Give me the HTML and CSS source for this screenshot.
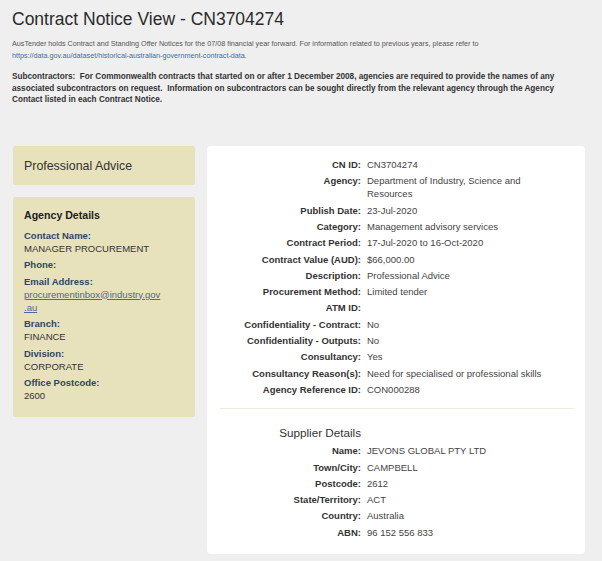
FILE: index.html
```html
<!DOCTYPE html>
<html>
<head>
<meta charset="utf-8">
<link rel="stylesheet" href="styles.css">
</head>
<body>
<div class="page">
  <h1 class="title">Contract Notice View - CN3704274</h1>
  <p class="intro">AusTender holds Contract and Standing Offer Notices for the 07/08 financial year forward. For information related to previous years, please refer to <a class="link" href="#">https://data.gov.au/dataset/historical-australian-government-contract-data</a>.</p>
  <p class="subs">Subcontractors:&nbsp; For Commonwealth contracts that started on or after 1 December 2008, agencies are required to provide the names of any associated subcontractors on request.&nbsp; Information on subcontractors can be sought directly from the relevant agency through the Agency Contact listed in each Contract Notice.</p>

  <div class="main">
    <div class="side">
      <div class="box box-cat">Professional Advice</div>
      <div class="box box-agency">
        <div class="agency-title">Agency Details</div>
        <dl class="agency-list">
          <dt>Contact Name:</dt><dd>MANAGER PROCUREMENT</dd>
          <dt>Phone:</dt><dd></dd>
          <dt>Email Address:</dt><dd><a class="mail" href="#">procurementinbox@industry.gov<br>.au</a></dd>
          <dt>Branch:</dt><dd>FINANCE</dd>
          <dt>Division:</dt><dd>CORPORATE</dd>
          <dt>Office Postcode:</dt><dd>2600</dd>
        </dl>
      </div>
    </div>

    <div class="panel">
      <div class="rows">
        <div class="row"><span class="lbl">CN ID:</span><span class="val">CN3704274</span></div>
        <div class="row"><span class="lbl">Agency:</span><span class="val">Department of Industry, Science and Resources</span></div>
        <div class="row"><span class="lbl">Publish Date:</span><span class="val">23-Jul-2020</span></div>
        <div class="row"><span class="lbl">Category:</span><span class="val">Management advisory services</span></div>
        <div class="row"><span class="lbl">Contract Period:</span><span class="val">17-Jul-2020 to 16-Oct-2020</span></div>
        <div class="row"><span class="lbl">Contract Value (AUD):</span><span class="val">$66,000.00</span></div>
        <div class="row"><span class="lbl">Description:</span><span class="val">Professional Advice</span></div>
        <div class="row"><span class="lbl">Procurement Method:</span><span class="val">Limited tender</span></div>
        <div class="row"><span class="lbl">ATM ID:</span><span class="val"></span></div>
        <div class="row"><span class="lbl">Confidentiality - Contract:</span><span class="val">No</span></div>
        <div class="row"><span class="lbl">Confidentiality - Outputs:</span><span class="val">No</span></div>
        <div class="row"><span class="lbl">Consultancy:</span><span class="val">Yes</span></div>
        <div class="row"><span class="lbl">Consultancy Reason(s):</span><span class="val">Need for specialised or professional skills</span></div>
        <div class="row"><span class="lbl">Agency Reference ID:</span><span class="val">CON000288</span></div>
      </div>
      <hr class="sep">
      <div class="rows">
        <div class="row head"><span class="lbl sup-title">Supplier Details</span><span class="val"></span></div>
        <div class="row"><span class="lbl">Name:</span><span class="val">JEVONS GLOBAL PTY LTD</span></div>
        <div class="row"><span class="lbl">Town/City:</span><span class="val">CAMPBELL</span></div>
        <div class="row"><span class="lbl">Postcode:</span><span class="val">2612</span></div>
        <div class="row"><span class="lbl">State/Territory:</span><span class="val">ACT</span></div>
        <div class="row"><span class="lbl">Country:</span><span class="val">Australia</span></div>
        <div class="row"><span class="lbl">ABN:</span><span class="val">96 152 556 833</span></div>
      </div>
    </div>
  </div>
</div>
</body>
</html>
```

FILE: styles.css
```css
html, body {
  margin: 0;
  padding: 0;
  background: #efefef;
}
body {
  font-family: "Liberation Sans", Arial, sans-serif;
  color: #333;
}
.page {
  padding: 0 17px 0 12px;
}
.title {
  font-size: 17.5px;
  font-weight: normal;
  margin: 0;
  padding-top: 5px;
  line-height: 28px;
  color: #2b2b2b;
}
.intro {
  margin: 5px 0 0;
  font-size: 7.2px;
  line-height: 12px;
  color: #555;
}
.link {
  color: #3b6ea3;
  text-decoration: none;
}
.subs {
  margin: 9px 0 0;
  font-size: 8.2px;
  line-height: 11.5px;
  font-weight: bold;
  color: #333;
}
.main {
  display: flex;
  gap: 12px;
  margin-top: 40px;
  align-items: flex-start;
  padding-left: 1px;
}
.side {
  width: 182px;
  display: flex;
  flex-direction: column;
  gap: 12px;
}
.box {
  background: #e7e1bc;
  border-radius: 3px;
}
.box-cat {
  height: 39px;
  display: flex;
  align-items: center;
  padding-left: 11px;
  padding-top: 1px;
  box-sizing: border-box;
  font-size: 12.4px;
  color: #333;
}
.box-agency {
  padding: 12px 11px 15px;
}
.agency-title {
  font-weight: bold;
  font-size: 10.6px;
  line-height: 12px;
  color: #222;
  margin-bottom: 8px;
}
.agency-list {
  margin: 0;
  font-size: 9.5px;
  line-height: 13px;
}
.agency-list dt {
  font-weight: bold;
  color: #2f4763;
  margin-top: 3.5px;
}
.agency-list dt:first-child {
  margin-top: 0;
}
.agency-list dd {
  margin: 0;
  color: #333;
}
.mail {
  color: #4d6a8f;
  text-decoration: underline;
}
.panel {
  flex: 1;
  background: #fff;
  border-radius: 4px;
  padding: 11px 11px 14px 13px;
}
.rows {
  display: flex;
  flex-direction: column;
}
.row {
  display: grid;
  grid-template-columns: 141px 1fr;
  column-gap: 6px;
  font-size: 9.5px;
  line-height: 13px;
  padding: 1.65px 0;
}
.lbl {
  text-align: right;
  font-weight: bold;
  color: #333;
}
.val {
  color: #444;
  padding-right: 18px;
}
.sep {
  border: 0;
  border-top: 1px solid #efecdc;
  margin: 11px 0 14px;
}
.sup-title {
  font-weight: normal;
  font-size: 11.7px;
  line-height: 16px;
  color: #333;
}
```
